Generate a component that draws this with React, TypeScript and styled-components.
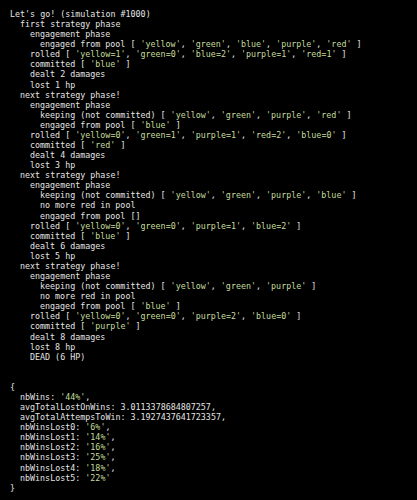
import React from "react";
import styled, { createGlobalStyle } from "styled-components";

const Global = createGlobalStyle`
  html, body { margin: 0; padding: 0; background: #000; }
  #root { min-height: 500px; background: #000; }
`;

const Console = styled.pre`
  margin: 0;
  padding: 9px 0 0 10px;
  background: #000;
  color: #e4e4e4;
  font-family: "DejaVu Sans Mono", "Liberation Mono", monospace;
  font-size: 8.35px;
  line-height: 10.09px;
  min-height: 491px;
  white-space: pre;
`;

const Line = styled.div<{ $indent: number }>`
  height: 10.09px;
  padding-left: ${(p) => p.$indent * 5}px;
`;

const Str = styled.span`
  color: #c4dc9c;
`;

type Tok = string | { s: string };

const arr = (items: string[]): Tok[] => {
  if (items.length === 0) return ["[]"];
  const out: Tok[] = ["[ "];
  items.forEach((it, i) => {
    out.push({ s: `'${it}'` });
    out.push(i < items.length - 1 ? ", " : " ]");
  });
  return out;
};

const L = (indent: number, ...toks: (Tok | Tok[])[]) => ({ indent, toks: toks.flat() as Tok[] });

const lines = [
  L(0, "Let's go! (simulation #1000)"),
  L(2, "first strategy phase"),
  L(4, "engagement phase"),
  L(6, "engaged from pool ", arr(["yellow", "green", "blue", "purple", "red"])),
  L(4, "rolled ", arr(["yellow=1", "green=0", "blue=2", "purple=1", "red=1"])),
  L(4, "committed ", arr(["blue"])),
  L(4, "dealt 2 damages"),
  L(4, "lost 1 hp"),
  L(2, "next strategy phase!"),
  L(4, "engagement phase"),
  L(6, "keeping (not committed) ", arr(["yellow", "green", "purple", "red"])),
  L(6, "engaged from pool ", arr(["blue"])),
  L(4, "rolled ", arr(["yellow=0", "green=1", "purple=1", "red=2", "blue=0"])),
  L(4, "committed ", arr(["red"])),
  L(4, "dealt 4 damages"),
  L(4, "lost 3 hp"),
  L(2, "next strategy phase!"),
  L(4, "engagement phase"),
  L(6, "keeping (not committed) ", arr(["yellow", "green", "purple", "blue"])),
  L(6, "no more red in pool"),
  L(6, "engaged from pool ", arr([])),
  L(4, "rolled ", arr(["yellow=0", "green=0", "purple=1", "blue=2"])),
  L(4, "committed ", arr(["blue"])),
  L(4, "dealt 6 damages"),
  L(4, "lost 5 hp"),
  L(2, "next strategy phase!"),
  L(4, "engagement phase"),
  L(6, "keeping (not committed) ", arr(["yellow", "green", "purple"])),
  L(6, "no more red in pool"),
  L(6, "engaged from pool ", arr(["blue"])),
  L(4, "rolled ", arr(["yellow=0", "green=0", "purple=2", "blue=0"])),
  L(4, "committed ", arr(["purple"])),
  L(4, "dealt 8 damages"),
  L(4, "lost 8 hp"),
  L(4, "DEAD (6 HP)"),
  L(0, ""),
  L(0, ""),
  L(0, "{"),
  L(2, "nbWins: ", { s: "'44%'" }, ","),
  L(2, "avgTotalLostOnWins: 3.0113378684807257,"),
  L(2, "avgTotalAttempsToWin: 3.1927437641723357,"),
  L(2, "nbWinsLost0: ", { s: "'6%'" }, ","),
  L(2, "nbWinsLost1: ", { s: "'14%'" }, ","),
  L(2, "nbWinsLost2: ", { s: "'16%'" }, ","),
  L(2, "nbWinsLost3: ", { s: "'25%'" }, ","),
  L(2, "nbWinsLost4: ", { s: "'18%'" }, ","),
  L(2, "nbWinsLost5: ", { s: "'22%'" }),
  L(0, "}"),
];

export default function App() {
  return (
    <>
      <Global />
      <Console>
        {lines.map((ln, i) => (
          <Line key={i} $indent={ln.indent}>
            {ln.toks.map((t, j) =>
              typeof t === "string" ? <React.Fragment key={j}>{t}</React.Fragment> : <Str key={j}>{t.s}</Str>
            )}
          </Line>
        ))}
      </Console>
    </>
  );
}
